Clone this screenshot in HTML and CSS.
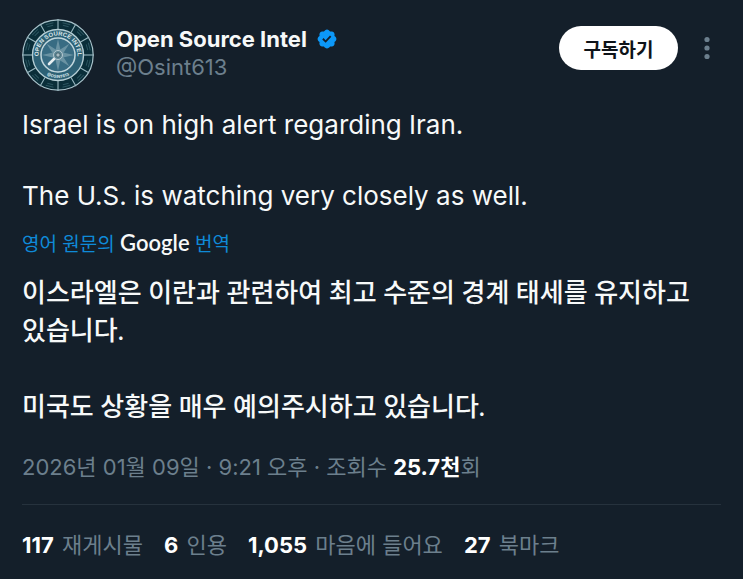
FILE: index.html
```html
<!DOCTYPE html>
<html lang="ko">
<head>
  <meta charset="UTF-8">
  <title>Open Source Intel</title>
  <meta name="viewport" content="width=device-width, initial-scale=1.0">
  <link rel="stylesheet" href="styles.css">
</head>
<body>
  <article class="post">
    <header class="post-header">
      <svg class="avatar" viewBox="-36 -36 72 72" aria-hidden="true">
        <defs>
          <path id="arc-top" d="M-19.5 0A19.5 19.5 0 0 1 19.5 0"/>
          <path id="arc-bottom" d="M-23 0A23 23 0 0 0 23 0"/>
          <path id="divider" d="M0 -26V-36"/>
          <path id="label" d="M-4 -32.4H4M-3 -30H3"/>
          <path id="needle" d="M0 -16L2.4 -5L0 0L-2.4 -5Z"/>
        </defs>
        <circle r="35.2" fill="#0a2e39" stroke="#a9c3cb" stroke-width="1.2"/>
        <!-- outer ring cells -->
        <g stroke="#9ab8c1" stroke-width="1.1">
          <use href="#divider"/>
          <use href="#divider" transform="rotate(30)"/>
          <use href="#divider" transform="rotate(60)"/>
          <use href="#divider" transform="rotate(90)"/>
          <use href="#divider" transform="rotate(120)"/>
          <use href="#divider" transform="rotate(150)"/>
          <use href="#divider" transform="rotate(180)"/>
          <use href="#divider" transform="rotate(210)"/>
          <use href="#divider" transform="rotate(240)"/>
          <use href="#divider" transform="rotate(270)"/>
          <use href="#divider" transform="rotate(300)"/>
          <use href="#divider" transform="rotate(330)"/>
        </g>
        <g stroke="#2c5560" stroke-width="1">
          <use href="#label" transform="rotate(15)"/>
          <use href="#label" transform="rotate(45)"/>
          <use href="#label" transform="rotate(75)"/>
          <use href="#label" transform="rotate(105)"/>
          <use href="#label" transform="rotate(135)"/>
          <use href="#label" transform="rotate(165)"/>
          <use href="#label" transform="rotate(195)"/>
          <use href="#label" transform="rotate(225)"/>
          <use href="#label" transform="rotate(255)"/>
          <use href="#label" transform="rotate(285)"/>
          <use href="#label" transform="rotate(315)"/>
          <use href="#label" transform="rotate(345)"/>
        </g>
        <circle r="25.5" fill="#2d6175" stroke="#b4cdd4" stroke-width="1.4"/>
        <circle r="17" fill="#386c83" stroke="#c2d7dd" stroke-width="1.5"/>
        <text class="seal-name"><textPath href="#arc-top" startOffset="50%">OPEN SOURCE INTEL</textPath></text>
        <text class="seal-handle"><textPath href="#arc-bottom" startOffset="50%">@OSINT613</textPath></text>
        <!-- compass -->
        <g fill="#6a93a3">
          <use href="#needle"/>
          <use href="#needle" transform="rotate(45)"/>
          <use href="#needle" transform="rotate(90)"/>
          <use href="#needle" transform="rotate(135)"/>
          <use href="#needle" transform="rotate(180)"/>
          <use href="#needle" transform="rotate(270)"/>
          <use href="#needle" transform="rotate(315)"/>
        </g>
        <path d="M-3 3L-9 9" stroke="#e8eff1" stroke-width="2.6" stroke-linecap="round"/>
        <circle r="4.5" fill="#5d8796" stroke="#b5c9d0" stroke-width="1"/>
        <circle r="2.2" fill="#a9bdc4" stroke="#40606c" stroke-width="1"/>
      </svg>
      <div class="author">
        <div class="author-name">
          <a href="#">Open Source Intel</a>
          <svg class="badge" viewBox="1 1 20 20" role="img" aria-label="인증된 계정">
            <path fill="#0c98f8" d="M20.396 11c-.018-.646-.215-1.275-.57-1.816-.354-.54-.852-.972-1.438-1.246.223-.607.27-1.264.14-1.897-.131-.634-.437-1.218-.882-1.687-.47-.445-1.053-.75-1.687-.882-.633-.13-1.29-.083-1.897.14-.273-.587-.704-1.086-1.245-1.44S11.647 1.62 11 1.604c-.646.017-1.273.213-1.813.568s-.969.854-1.24 1.44c-.608-.223-1.267-.272-1.902-.14-.635.13-1.22.436-1.69.882-.445.47-.749 1.055-.878 1.688-.13.633-.08 1.29.144 1.896-.587.274-1.087.705-1.443 1.245-.356.54-.555 1.17-.574 1.817.02.647.218 1.276.574 1.817.356.54.856.972 1.443 1.245-.224.606-.274 1.263-.144 1.896.13.634.433 1.218.877 1.688.47.443 1.054.747 1.687.878.633.132 1.29.084 1.897-.136.274.586.705 1.084 1.246 1.439.54.354 1.17.551 1.816.569.647-.016 1.276-.213 1.817-.567s.972-.854 1.245-1.44c.604.239 1.266.296 1.903.164.636-.132 1.22-.447 1.68-.907.46-.46.776-1.044.908-1.681s.075-1.299-.165-1.903c.586-.274 1.084-.705 1.439-1.246.354-.54.551-1.17.569-1.816z"/>
            <path fill="#141f2a" d="M9.662 14.85l-3.429-3.428 1.293-1.302 2.072 2.072 4.4-4.794 1.347 1.246z"/>
          </svg>
        </div>
        <a class="author-handle" href="#">@Osint613</a>
      </div>
      <button class="subscribe" type="button">구독하기</button>
      <button class="more" type="button" aria-label="더 보기">
        <svg viewBox="0 0 6 24" aria-hidden="true">
          <circle cx="3" cy="3.5" r="2.6"/>
          <circle cx="3" cy="12" r="2.6"/>
          <circle cx="3" cy="20.5" r="2.6"/>
        </svg>
      </button>
    </header>

    <div class="original" lang="en">
      <p>Israel is on high alert regarding Iran.</p>
      <p>The U.S. is watching very closely as well.</p>
    </div>

    <a class="translate-source" href="#">영어 원문의 <span class="google">Google</span> 번역</a>

    <div class="translation">
      <p>이스라엘은 이란과 관련하여 최고 수준의 경계 태세를 유지하고 있습니다.</p>
      <p>미국도 상황을 매우 예의주시하고 있습니다.</p>
    </div>

    <div class="meta">2026년 01월 09일 · 9:21 오후 · 조회수 <strong>25.7천</strong>회</div>

    <footer class="stats">
      <a href="#"><strong>117</strong> 재게시물</a>
      <a href="#"><strong>6</strong> 인용</a>
      <a href="#"><strong>1,055</strong> 마음에 들어요</a>
      <a href="#"><strong>27</strong> 북마크</a>
    </footer>
  </article>
</body>
</html>
```
FILE: styles.css
```css
* { box-sizing: border-box; }
body { margin: 0; background: #141f2a; color: #f7f9f9; font-family: Inter, "Noto Sans CJK KR", sans-serif; }
a { color: inherit; text-decoration: none; }
p { margin: 0; }
button { border: none; padding: 0; font-family: inherit; cursor: pointer; }
.post { padding: 18px 22px 0; }

/* Header */
.post-header { display: flex; align-items: flex-start; }
.avatar { width: 72px; height: 74px; flex: none; }
.seal-name, .seal-handle { fill: #dce8eb; font-weight: 700; text-anchor: middle; }
.seal-name { font-family: "Liberation Sans", sans-serif; font-size: 6px; }
.seal-handle { font-size: 4px; }
.author { flex: 1; margin-left: 22px; padding-top: 7px; line-height: 28px; }
.author-name { display: flex; align-items: center; gap: 10px; font-size: 22px; font-weight: 700; }
.badge { width: 20px; height: 20px; }
.author-handle { display: block; color: #6c7f8d; font-size: 22px; }
.subscribe { margin-top: 8px; width: 119px; height: 44px; border-radius: 22px; background: #fff; color: #0f1419; font-size: 19px; font-weight: 700; }
.more { margin: 18px 11px 0 26px; height: 24px; background: none; }
.more svg { display: block; width: 6px; height: 24px; fill: #6c7f8d; }

/* Text */
.original { margin-top: 15px; font-size: 26px; line-height: 36px; }
.original p + p { margin-top: 35px; }
.translate-source { display: block; margin-top: 14px; color: #0f8ad8; font-size: 19px; line-height: 30px; }
.google { color: #f7f9f9; font-family: Lato, sans-serif; font-size: 22px; font-weight: 600; }
.translation { margin-top: 13px; font-family: Lato, "Noto Sans CJK KR", sans-serif; font-size: 26px; font-weight: 500; line-height: 38px; word-break: keep-all; }
.translation p + p { margin-top: 38px; }

/* Details */
.meta { margin-top: 25px; padding-bottom: 20px; border-bottom: 1px solid #26323d; color: #6c7f8d; font-size: 22px; line-height: 34px; }
.meta strong, .stats strong { color: #fff; font-weight: 700; }
.stats { display: flex; flex-wrap: wrap; gap: 21px; padding: 23px 0 17px; color: #6c7f8d; font-size: 22px; line-height: 34px; }
.stats strong { margin-right: 2px; }
```
